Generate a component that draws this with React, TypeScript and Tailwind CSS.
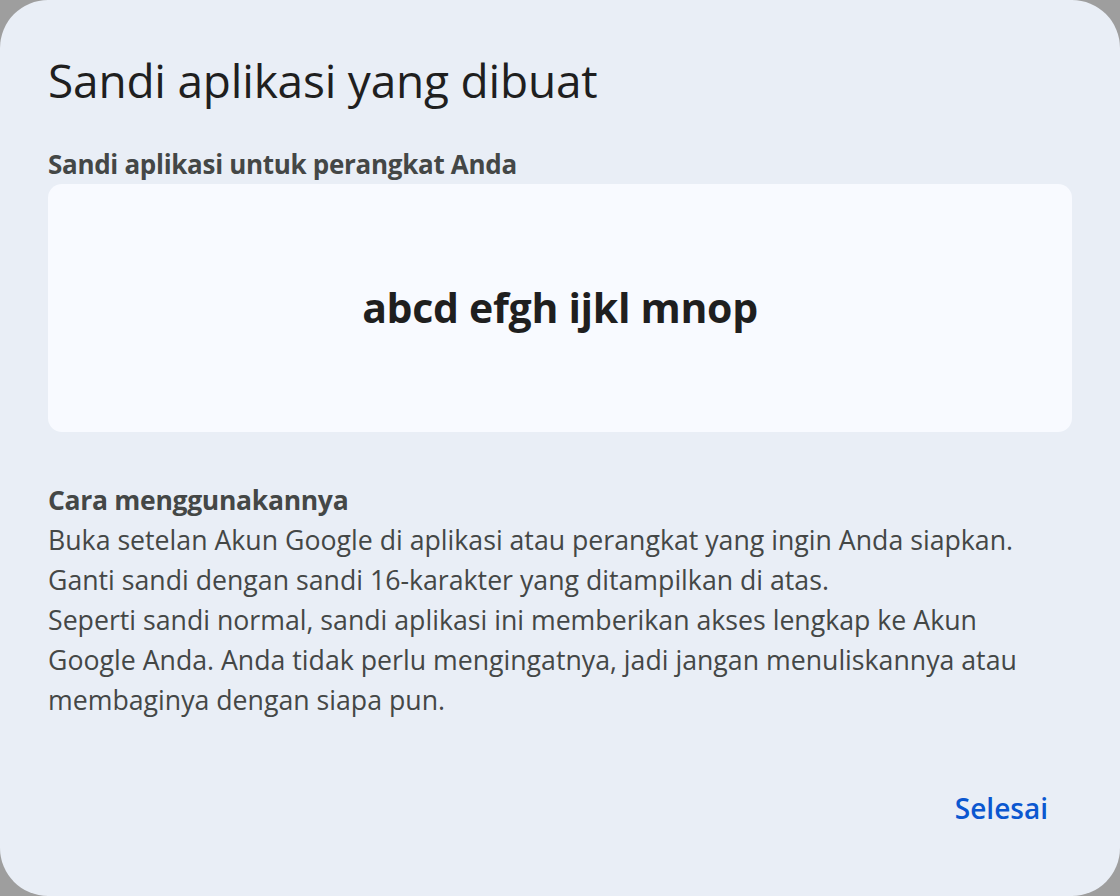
export default function App() {
  return (
    <div className="w-[1120px] h-[896px] bg-[#9e9e9e]" style={{ fontFamily: '"Open Sans", Roboto, sans-serif' }}>
      <div className="w-full h-full bg-[#e9eef6] rounded-[48px] px-12 pt-[52px] flex flex-col">
        <h1 className="text-[46px] leading-[56px] text-[#1f1f1f] tracking-[-0.2px]">Sandi aplikasi yang dibuat</h1>

        <div className="mt-10 text-[26px] leading-[32px] font-bold text-[#444746] tracking-[-0.3px]">
          Sandi aplikasi untuk perangkat Anda
        </div>
        <div className="mt-1 h-[248px] rounded-[14px] bg-[#f8faff] flex items-center justify-center">
          <span className="text-[41px] font-bold text-[#1f1f1f] tracking-[-0.3px]">abcd efgh ijkl mnop</span>
        </div>

        <div className="mt-12 text-[26.5px] leading-[40px] font-bold text-[#444746] tracking-[-0.3px]">
          Cara menggunakannya
        </div>
        <div className="text-[26.7px] leading-[40px] text-[#444746] whitespace-nowrap">
          <p>Buka setelan Akun Google di aplikasi atau perangkat yang ingin Anda siapkan.</p>
          <p>Ganti sandi dengan sandi 16-karakter yang ditampilkan di atas.</p>
          <p>
            Seperti sandi normal, sandi aplikasi ini memberikan akses lengkap ke Akun
            <br />
            Google Anda. Anda tidak perlu mengingatnya, jadi jangan menuliskannya atau
            <br />
            membaginya dengan siapa pun.
          </p>
        </div>

        <div className="mt-16 flex justify-end">
          <button className="h-12 px-6 rounded-full text-[28px] font-semibold text-[#0b57d0]">Selesai</button>
        </div>
      </div>
    </div>
  );
}
